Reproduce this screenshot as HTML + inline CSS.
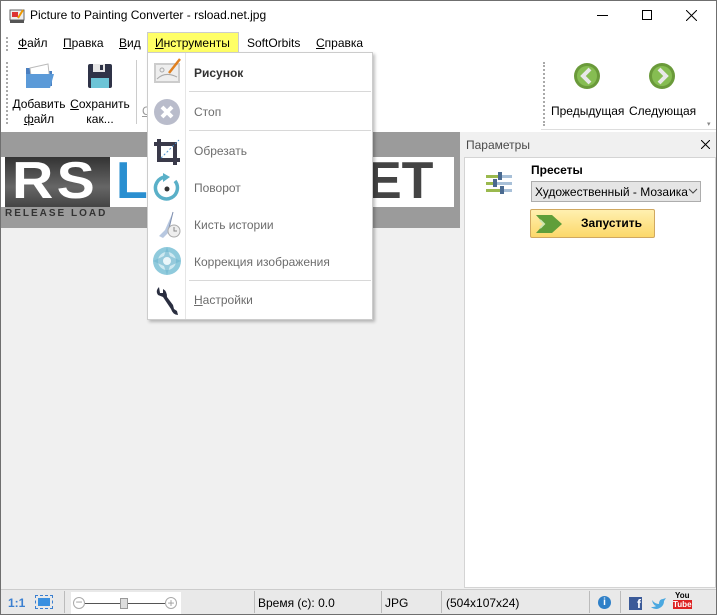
<!DOCTYPE html>
<html><head><meta charset="utf-8"><style>
*{margin:0;padding:0;box-sizing:border-box}
body{width:717px;height:615px;overflow:hidden;background:#f0f0f0;font-family:"Liberation Sans","Noto Sans CJK SC",sans-serif;font-size:12px;color:#000;position:relative}
.a{position:absolute}
.t{white-space:nowrap}
.mi{position:absolute;left:46px;font-size:12px;color:#6d6d6d}
</style></head><body>
<div class="a" style="left:0;top:0;width:717px;height:615px;border:1px solid #6f6f6f"></div>
<div class="a" style="left:1px;top:1px;width:715px;height:30px;background:#fff"></div>
<svg class="a" style="left:9px;top:8px" width="16" height="16"><rect x="1" y="2" width="14" height="10" fill="#eee" stroke="#666"/><rect x="3" y="4" width="6" height="5" fill="#d33"/><rect x="1" y="12" width="14" height="3" fill="#555"/><path d="M9 10 L14 2" stroke="#e90" stroke-width="2"/></svg>
<div class="a t" style="left:30px;top:8px;font-size:12px">Picture to Painting Converter - rsload.net.jpg</div>
<div class="a" style="left:597px;top:15px;width:11px;height:1px;background:#000"></div>
<div class="a" style="left:642px;top:10px;width:10px;height:10px;border:1px solid #000"></div>
<svg class="a" style="left:686px;top:10px" width="11" height="11"><path d="M0 0 L11 11 M11 0 L0 11" stroke="#000" stroke-width="1"/></svg>
<div class="a" style="left:1px;top:31px;width:715px;height:23px;background:#fff"></div>
<div class="a" style="left:6px;top:37px;width:2px;height:14px;border-left:2px dotted #aaa"></div>
<div class="a t" style="left:18px;top:36px"><u>Ф</u>айл</div>
<div class="a t" style="left:63px;top:36px"><u>П</u>равка</div>
<div class="a t" style="left:119px;top:36px"><u>В</u>ид</div>
<div class="a" style="left:147px;top:32px;width:92px;height:21px;background:#ffff66;border:1px solid #ccc;border-bottom:none"></div>
<div class="a t" style="left:155px;top:36px"><u>И</u>нструменты</div>
<div class="a t" style="left:247px;top:36px">SoftOrbits</div>
<div class="a t" style="left:316px;top:36px"><u>С</u>правка</div>
<div class="a" style="left:1px;top:54px;width:715px;height:78px;background:#fff"></div>
<div class="a" style="left:6px;top:62px;height:62px;border-left:2px dotted #aaa"></div>
<svg class="a" style="left:24px;top:62px" width="32" height="28"><path d="M2 6 L12 6 L14 9 L28 9 L28 24 L2 24Z" fill="#4a7fc0"/><path d="M6 6 L24 2 L26 20 L8 22Z" fill="#fff" stroke="#bbb"/><path d="M2 12 L30 12 L26 26 L2 26Z" fill="#5b9ad8"/></svg>
<div class="a t" style="left:12px;top:97px;text-align:center;width:54px;line-height:15px">Добавить<br><u>ф</u>айл</div>
<svg class="a" style="left:87px;top:63px" width="26" height="26"><rect x="1" y="1" width="24" height="24" rx="2" fill="#2f3347"/><rect x="6" y="1" width="12" height="8" fill="#e6e6e6"/><rect x="13" y="2" width="3" height="5" fill="#2f3347"/><rect x="4" y="15" width="18" height="10" fill="#6cc4d6"/></svg>
<div class="a t" style="left:70px;top:97px;text-align:center;width:60px;line-height:15px"><u>С</u>охранить<br>как...</div>
<div class="a" style="left:136px;top:60px;width:1px;height:64px;background:#ccc"></div>
<div class="a t" style="left:142px;top:104px;color:#999"><u>С</u></div>
<div class="a" style="left:543px;top:62px;height:64px;border-left:2px dotted #aaa"></div>
<svg class="a" style="left:573px;top:62px" width="28" height="28"><circle cx="14" cy="14" r="13" fill="#6a9a3a"/><circle cx="14" cy="14" r="10" fill="#86bd52"/><path d="M17 7 L10 14 L17 21" stroke="#e8e8e8" stroke-width="4" fill="none"/></svg>
<svg class="a" style="left:648px;top:62px" width="28" height="28"><circle cx="14" cy="14" r="13" fill="#6a9a3a"/><circle cx="14" cy="14" r="10" fill="#86bd52"/><path d="M11 7 L18 14 L11 21" stroke="#e8e8e8" stroke-width="4" fill="none"/></svg>
<div class="a t" style="left:551px;top:104px">Предыдущая</div>
<div class="a t" style="left:629px;top:104px">Следующая</div>
<div class="a" style="left:541px;top:129px;width:175px;height:1px;background:#ddd"></div>
<div class="a t" style="left:707px;top:120px;font-size:7px;color:#888">▾</div>
<div class="a" style="left:1px;top:132px;width:459px;height:96px;background:#9b9b9b"></div>
<div class="a" style="left:1px;top:157px;width:453px;height:50px;background:#fff"></div>
<div class="a" style="left:5px;top:157px;width:105px;height:50px;background:linear-gradient(#333,#666 60%,#444)"></div>
<div class="a t" style="left:12px;top:153px;font-size:52px;font-weight:bold;color:#fff;letter-spacing:3px;line-height:56px;transform:scaleX(1.1);transform-origin:left">RS</div>
<div class="a t" style="left:116px;top:153px;font-size:52px;font-weight:bold;color:#2a8fd0;line-height:56px">L</div>
<div class="a t" style="left:367px;top:153px;font-size:52px;font-weight:bold;color:#444;line-height:56px">ET</div>
<div class="a t" style="left:5px;top:208px;font-size:10px;color:#333;letter-spacing:2px;font-weight:bold">RELEASE LOAD</div>
<div class="a" style="left:147px;top:52px;width:226px;height:268px;background:#fff;border:1px solid #ccc;box-shadow:2px 2px 3px rgba(0,0,0,.25)">
 <div class="a" style="left:37px;top:0;width:1px;height:266px;background:#e6e6e6"></div>
 <div class="a" style="left:41px;top:38px;width:182px;height:1px;background:#d8d8d8"></div>
 <div class="a" style="left:41px;top:77px;width:182px;height:1px;background:#d8d8d8"></div>
 <div class="a" style="left:41px;top:227px;width:182px;height:1px;background:#d8d8d8"></div>
 <svg class="a" style="left:5px;top:4px" width="30" height="28"><rect x="1" y="6" width="26" height="20" fill="#ccc"/><rect x="3" y="8" width="22" height="16" fill="#eee"/><path d="M4 22 Q12 14 24 20" stroke="#aaa" fill="none"/><circle cx="9" cy="13" r="2" fill="none" stroke="#aaa"/><path d="M16 16 L27 2" stroke="#e08020" stroke-width="2.5"/></svg>
 <div class="mi" style="top:13px;color:#333;font-weight:bold">Рисунок</div>
 <svg class="a" style="left:5px;top:45px" width="28" height="28"><circle cx="14" cy="14" r="13" fill="#b9bccb"/><path d="M9 9 L19 19 M19 9 L9 19" stroke="#fff" stroke-width="4"/></svg>
 <div class="mi" style="top:52px">Стоп</div>
 <svg class="a" style="left:5px;top:85px" width="28" height="28"><path d="M6 1 V22 H27 M1 6 H22 V27" stroke="#3a3a4a" stroke-width="4" fill="none"/><path d="M8 20 L26 2" stroke="#4a90d0" stroke-dasharray="2 2"/></svg>
 <div class="mi" style="top:91px">Обрезать</div>
 <svg class="a" style="left:5px;top:120px" width="28" height="28"><path d="M22 8 A11 11 0 1 1 12 4" stroke="#5ab0c8" stroke-width="3.5" fill="none"/><path d="M10 0 L17 4 L10 9Z" fill="#5ab0c8"/><circle cx="14" cy="16" r="2.5" fill="#333"/></svg>
 <div class="mi" style="top:128px">Поворот</div>
 <svg class="a" style="left:5px;top:157px" width="30" height="30"><path d="M20 2 L12 20 L6 26 L10 28 L16 22Z" fill="#b8c8e0"/><path d="M20 2 L16 18" stroke="#8090b0"/><circle cx="21" cy="21" r="6" fill="#eee" stroke="#aaa"/><path d="M21 17 V21 H24" stroke="#888" fill="none"/></svg>
 <div class="mi" style="top:165px">Кисть истории</div>
 <svg class="a" style="left:5px;top:194px" width="28" height="28"><circle cx="14" cy="14" r="14" fill="#8fcadc"/><circle cx="14" cy="14" r="9" fill="#cfe9f1"/><path d="M14 0 L17 9 L28 14 L17 19 L14 28 L11 19 L0 14 L11 9Z" fill="#6fb6cf" opacity=".6"/><circle cx="14" cy="14" r="4" fill="#eaf6fa"/></svg>
 <div class="mi" style="top:202px">Коррекция изображения</div>
 <svg class="a" style="left:5px;top:232px" width="28" height="32"><path d="M6 2 Q2 6 5 10 L10 12 L18 24 Q20 30 25 30 L24 26 L21 24 L20 20 L14 12 Q14 6 10 4 L10 8 L7 8Z" fill="#2a2e40"/></svg>
 <div class="mi" style="top:240px"><u>Н</u>астройки</div>
</div>
<div class="a t" style="left:466px;top:138px;color:#4a4a4a;font-size:12px">Параметры</div>
<svg class="a" style="left:701px;top:140px" width="9" height="9"><path d="M0 0 L9 9 M9 0 L0 9" stroke="#000"/></svg>
<div class="a" style="left:464px;top:157px;width:252px;height:431px;background:#fff;border:1px solid #d4d4d4"></div>
<svg class="a" style="left:485px;top:172px" width="28" height="24"><rect x="1" y="3" width="26" height="3" fill="#a8c0d8"/><rect x="1" y="3" width="12" height="3" fill="#9ab94e"/><rect x="13" y="0" width="4" height="8" fill="#4a6a90"/><rect x="1" y="10" width="26" height="3" fill="#a8c0d8"/><rect x="1" y="10" width="7" height="3" fill="#9ab94e"/><rect x="8" y="7" width="4" height="8" fill="#4a6a90"/><rect x="1" y="17" width="26" height="3" fill="#a8c0d8"/><rect x="1" y="17" width="14" height="3" fill="#9ab94e"/><rect x="15" y="14" width="4" height="8" fill="#4a6a90"/></svg>
<div class="a t" style="left:531px;top:163px;font-weight:bold">Пресеты</div>
<div class="a" style="left:531px;top:181px;width:170px;height:21px;background:#e5e5e5;border:1px solid #adadad"></div>
<div class="a t" style="left:535px;top:185px">Художественный - Мозаика</div>
<svg class="a" style="left:688px;top:188px" width="10" height="6"><path d="M1 1 L5 5 L9 1" stroke="#444" fill="none"/></svg>
<div class="a" style="left:530px;top:209px;width:125px;height:29px;border:1px solid #d0a860;border-radius:2px;background:linear-gradient(#fff0b0,#fcd86a)"></div>
<svg class="a" style="left:536px;top:212px" width="30" height="24"><path d="M0 3 H16 L26 12 L16 21 H0 L8 12Z" fill="#5f9e3a"/><path d="M4 8 L8 12 L4 16" stroke="#cfe5b0" stroke-width="2" fill="none"/></svg>
<div class="a t" style="left:581px;top:216px;font-weight:bold">Запустить</div>
<div class="a" style="left:1px;top:589px;width:715px;height:25px;background:#e9e9e9;border-top:1px solid #ccc"></div>
<div class="a t" style="left:8px;top:596px;color:#3a7fd0;font-weight:bold">1:1</div>
<div class="a" style="left:35px;top:595px;width:18px;height:14px;border:1px dashed #3a7fd0"></div>
<div class="a" style="left:38px;top:598px;width:12px;height:8px;background:#3a90e0"></div>
<div class="a" style="left:64px;top:591px;width:1px;height:22px;background:#bbb"></div>
<div class="a" style="left:71px;top:592px;width:110px;height:22px;background:#fff"></div>
<div class="a" style="left:73px;top:597px;width:12px;height:12px;border:1px solid #aaa;border-radius:50%;text-align:center;line-height:9px;color:#999">−</div>
<div class="a" style="left:85px;top:603px;width:80px;height:1px;background:#555"></div>
<div class="a" style="left:120px;top:598px;width:8px;height:11px;background:#ddd;border:1px solid #999"></div>
<div class="a" style="left:165px;top:597px;width:12px;height:12px;border:1px solid #aaa;border-radius:50%;text-align:center;line-height:10px;color:#999">+</div>
<div class="a" style="left:254px;top:591px;width:1px;height:22px;background:#bbb"></div>
<div class="a t" style="left:258px;top:596px">Время (с): 0.0</div>
<div class="a" style="left:381px;top:591px;width:1px;height:22px;background:#bbb"></div>
<div class="a t" style="left:385px;top:596px">JPG</div>
<div class="a" style="left:441px;top:591px;width:1px;height:22px;background:#bbb"></div>
<div class="a t" style="left:446px;top:596px">(504x107x24)</div>
<div class="a" style="left:589px;top:591px;width:1px;height:22px;background:#bbb"></div>
<div class="a" style="left:598px;top:596px;width:13px;height:13px;border-radius:50%;background:#2f80c8;color:#fff;font-size:10px;font-weight:bold;text-align:center;line-height:13px">i</div>
<div class="a" style="left:620px;top:591px;width:1px;height:22px;background:#bbb"></div>
<div class="a" style="left:629px;top:597px;width:13px;height:13px;background:#3b5a98;color:#fff;font-weight:bold;font-size:12px;line-height:14px;text-align:right;padding-right:1px">f</div>
<svg class="a" style="left:651px;top:597px" width="15" height="13"><path d="M1 3 Q4 7 8 7 Q8 2 12 2 L15 1 L13 4 Q13 10 6 12 Q2 12 0 10 Q4 10 5 9 Q2 8 1 3Z" fill="#4aa8e0"/></svg>
<div class="a t" style="left:673px;top:591px;font-size:8px;font-weight:bold;line-height:9px;text-align:center">You<br><span style="background:#d22;color:#fff">Tube</span></div>
</body></html>
